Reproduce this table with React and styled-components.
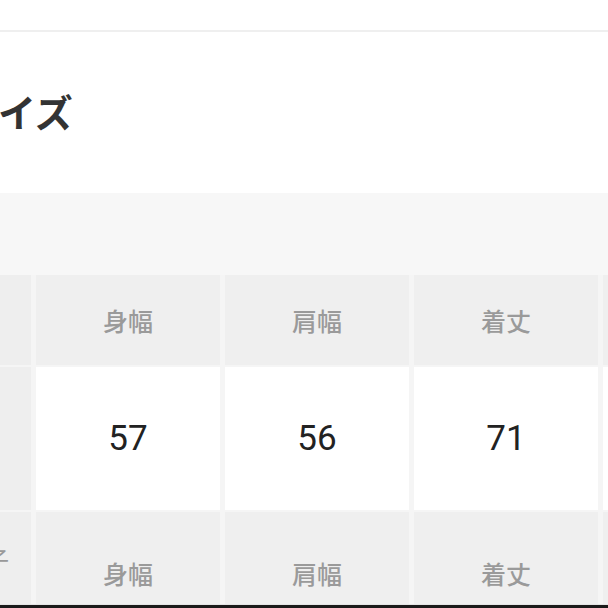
import React from 'react';
import styled, { createGlobalStyle } from 'styled-components';

const GlobalStyle = createGlobalStyle`
  html, body {
    margin: 0;
    padding: 0;
    background: #fff;
    overflow: hidden;
  }
  body {
    font-family: Roboto, "Noto Sans CJK JP", sans-serif;
  }
`;

const Page = styled.div`
  width: 608px;
  height: 608px;
  overflow: hidden;
  position: relative;
  background: #fff;
`;

const TopBar = styled.div`
  height: 30px;
  border-bottom: 2px solid #efefef;
`;

const TitleBlock = styled.div`
  height: 161px;
  display: flex;
  align-items: center;
  padding-bottom: 4px;
  box-sizing: border-box;
`;

const Title = styled.h2`
  margin: 0 0 0 -40px;
  font-family: "Noto Sans CJK JP", sans-serif;
  font-size: 38px;
  font-weight: 700;
  color: #333;
  white-space: nowrap;
`;

const Band = styled.div`
  height: 82px;
  background: #f7f7f7;
`;

const Table = styled.div`
  display: grid;
  grid-template-columns: 31px repeat(4, 184px);
  grid-template-rows: 90px 143px 122px;
  column-gap: 5px;
  row-gap: 2px;
  width: 800px;
  background: #f5f5f5;
`;

const Side = styled.div`
  background: #eeeeee;
  display: flex;
  align-items: center;
  justify-content: flex-end;
  overflow: hidden;
`;

const SideLabel = styled.span`
  font-family: "Noto Sans CJK JP", sans-serif;
  font-size: 24px;
  color: #999;
  margin: 0 22px 30px 0;
`;

const HeadCell = styled.div`
  background: #efefef;
  display: flex;
  align-items: center;
  justify-content: center;
  font-family: "Noto Sans CJK JP", sans-serif;
  font-size: 25px;
  font-weight: 500;
  color: #9a9a9a;
`;

const ValueCell = styled.div`
  background: #fff;
  display: flex;
  align-items: center;
  justify-content: center;
  font-family: Roboto, sans-serif;
  font-size: 35px;
  color: #222;
`;

const ScreenEdge = styled.div`
  position: absolute;
  left: 0;
  right: 0;
  bottom: 0;
  height: 3px;
  border-top: 1px solid #e4e4e4;
  background: #1a1a1a;
`;

const heads = ['身幅', '肩幅', '着丈', '袖丈'];
const values = ['57', '56', '71', '62'];

export default function App() {
  return (
    <Page>
      <GlobalStyle />
      <TopBar />
      <TitleBlock>
        <Title>サイズ</Title>
      </TitleBlock>
      <Band />
      <Table>
        <Side />
        {heads.map((h) => (
          <HeadCell key={`h1-${h}`}>{h}</HeadCell>
        ))}
        <Side />
        {values.map((v, i) => (
          <ValueCell key={`v-${i}`}>{v}</ValueCell>
        ))}
        <Side>
          <SideLabel>子</SideLabel>
        </Side>
        {heads.map((h) => (
          <HeadCell key={`h2-${h}`}>{h}</HeadCell>
        ))}
      </Table>
      <ScreenEdge />
    </Page>
  );
}
